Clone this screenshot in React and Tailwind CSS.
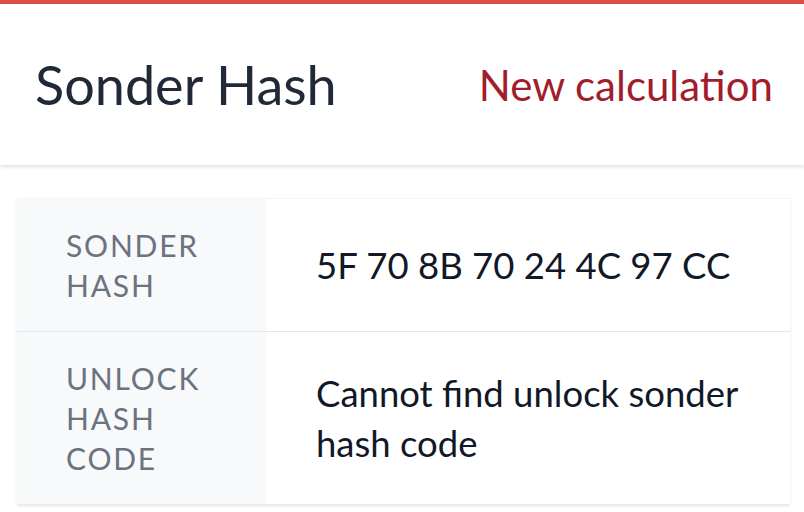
import React from 'react';

const rows = [
  { label: ['SONDER', 'HASH'], value: '5F 70 8B 70 24 4C 97 CC' },
  { label: ['UNLOCK', 'HASH', 'CODE'], value: 'Cannot find unlock sonder hash code' },
];

export default function App() {
  return (
    <div className="min-h-screen bg-white" style={{ fontFamily: 'Lato, "Noto Sans", sans-serif' }}>
      <div className="h-[4px] bg-[#dc4d47]" />
      <header className="h-[161px] flex items-center justify-between pl-[35px] pr-[31px] bg-white shadow-[0_2px_4px_rgba(0,0,0,0.12)]">
        <h1 className="text-[54px] leading-[70px] text-[#1f2937]">Sonder Hash</h1>
        <button className="text-[42px] leading-[70px] text-[#a21d2c]">New calculation</button>
      </header>

      <div className="pt-[33px] pl-[17px] pr-[14px]">
        <table className="w-full border-t border-[#f3f4f6] shadow-[0_2px_3px_rgba(0,0,0,0.1)]">
          <tbody>
            {rows.map((row, i) => (
              <tr key={i} className={i > 0 ? 'border-t border-[#e5e7eb]' : ''}>
                <td className="w-[249px] bg-[#f8f9fb] pl-[49px] py-[26px] align-top text-[30px] leading-[40px] tracking-[0.06em] text-[#6b7280]">
                  {row.label.map(l => <div key={l}>{l}</div>)}
                </td>
                <td className="pl-[50px] pr-[40px] py-[26px] align-middle text-[36.5px] leading-[50px] text-[#111827]">
                  {row.value}
                </td>
              </tr>
            ))}
          </tbody>
        </table>
      </div>
    </div>
  );
}
